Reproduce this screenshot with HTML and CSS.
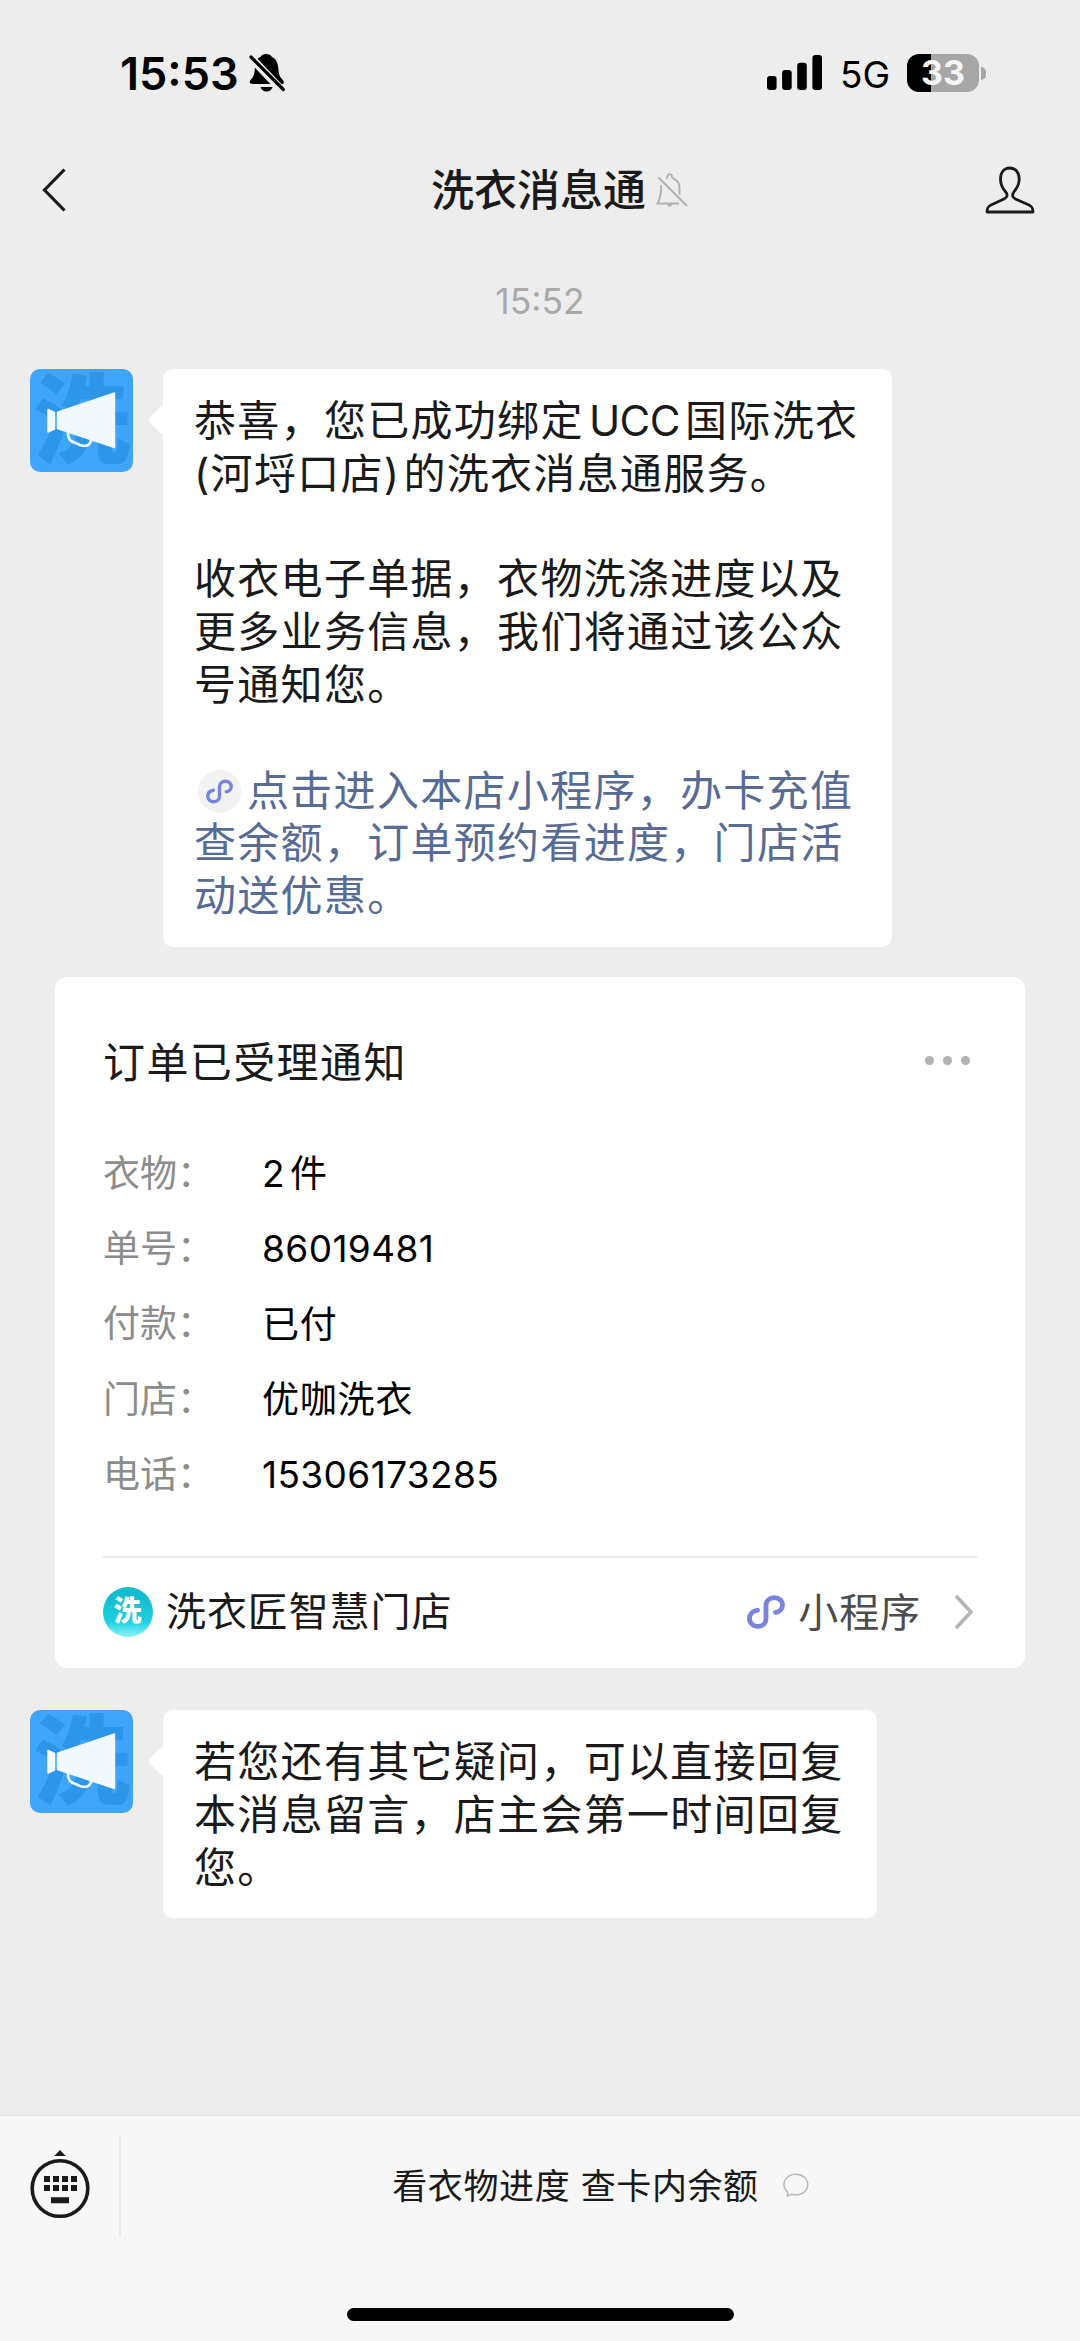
FILE: index.html
```
<!DOCTYPE html>
<html lang="zh-CN">
<head>
    <meta charset="UTF-8">
    <meta name="viewport" content="width=device-width, initial-scale=1.0">
    <title>洗衣消息通</title>
    <link rel="stylesheet" href="styles.css">
</head>
<body>
    <!-- Shared icons -->
    <svg class="defs" width="0" height="0">
        <symbol id="mini" viewBox="0 0 38 34">
            <path d="M10.5 15.2C5.800 16 2.500 19 2.500 23.500C2.500 28 6.200 31.400 11 31.400C15.800 31.400 19 28 19 23.500V10.500C19 6 22.500 2.600 27.200 2.600C32 2.600 35.500 5.800 35.500 10C35.500 14 32.500 17 28.500 17.300" fill="none" stroke="currentColor" stroke-width="4.800" stroke-linecap="round"/>
        </symbol>
        <symbol id="horn" viewBox="0 0 103 103">
            <path d="M18 40.500L24.500 43.500V60L18 63Z M27.500 43.300L84.500 24V78.500L27.500 59.500Z" fill="#f1f8fe" stroke="#f1f8fe" stroke-width="1.500" stroke-linejoin="round"/>
            <path d="M38 63C38 69 39 71 42 72.500L50 76C56 78 59.500 77 61.500 71" fill="none" stroke="#f1f8fe" stroke-width="2.800"/>
        </symbol>
    </svg>

    <!-- Status bar -->
    <div class="status">
        <span class="clock">15:53</span>
        <svg class="silent" width="36" height="38" viewBox="0 0 36 38">
            <path d="M17 0C20 0 22 1 23 3C28 5 29 10 29.500 16C30 21 31 23 33 25C35 27 35.500 28.500 34 30H4C0 30 0 27.500 2 25.500C5.500 22 5.500 18 6 13C6.500 7 8 4.500 11.500 3C12.500 1 14.500 0 17 0Z"/>
            <path d="M11.500 33H23.500C22.500 36 20.500 37.500 17.500 37.500C14.500 37.500 12.500 36 11.500 33Z"/>
            <path d="M-2 -.500L34 37.500" stroke="#ededed" stroke-width="8"/>
            <path d="M2 3L34.300 35.500" stroke="#000" stroke-width="3.200" stroke-linecap="round"/>
        </svg>
        <svg class="signal" width="56" height="36" viewBox="0 0 56 36">
            <rect x="0" y="21" width="9.600" height="14" rx="3"/>
            <rect x="15.100" y="15" width="9.600" height="20" rx="3"/>
            <rect x="30.200" y="7.700" width="9.600" height="27.300" rx="3"/>
            <rect x="45.400" y="0" width="9.600" height="35" rx="3"/>
        </svg>
        <span class="network">5G</span>
        <div class="battery"><span>33</span></div>
        <div class="battery-cap"></div>
    </div>

    <!-- Nav bar -->
    <div class="navbar">
        <svg class="back" width="26" height="46" viewBox="0 0 26 46">
            <path d="M23.500 2.500L3.500 23L23.500 43.500" fill="none" stroke="#1a1a1a" stroke-width="3.200"/>
        </svg>
        <div class="title">
            <h1>洗衣消息通</h1>
            <svg width="32" height="34" viewBox="0 0 32 34" fill="none" stroke="#b0b0b0" stroke-width="1.900">
                <path d="M10 5.500C11 4.800 11.500 4.500 11.500 3.500C12 .500 15.500 .500 16 3.500C16 4.500 16.500 5 18 5.800C22 7.800 23.500 11 23.500 14.500V22"/>
                <path d="M5 12V17C5 23 4 25 1.500 30.500H23"/>
                <path d="M11.500 30.500Q13.800 35 16 30.500"/>
                <path d="M2.500 4.500L31 33"/>
            </svg>
        </div>
        <svg class="profile" width="50" height="48" viewBox="0 0 50 48">
            <path d="M24.800 2C19 2 15.500 6.500 15.500 13C15.500 18 17 21.500 20 25C23 28.500 22.800 31 19 33L6 39C2.500 40.800 2 42.500 2 46H48C48 42.500 47.500 40.800 44 39L30.500 33C26.800 31 26.800 28.500 29.500 25C32.500 21.500 34.200 18 34.200 13C34.200 6.500 30.600 2 24.800 2Z" fill="none" stroke="#1a1a1a" stroke-width="2.800" stroke-linejoin="round"/>
        </svg>
    </div>

    <!-- Messages -->
    <div class="chat">
        <div class="time">15:52</div>

        <div class="message">
            <div class="avatar"><span>洗</span><svg><use href="#horn"/></svg></div>
            <div class="bubble wide">
                恭喜，您已成功绑定<span class="latin">UCC</span>国际洗衣<br>
                (河埒口店<span class="paren">)</span>的洗衣消息通服务。<br>
                <br>
                收衣电子单据，衣物洗涤进度以及<br>
                更多业务信息，我们将通过该公众<br>
                号通知您。<br>
                <br>
                <a class="link"><span class="link-icon"><svg><use href="#mini"/></svg></span>点击进入本店小程序，办卡充值<br>
                查余额，订单预约看进度，门店活<br>
                动送优惠。</a>
            </div>
        </div>

        <div class="card">
            <div class="card-head">
                <h2>订单已受理通知</h2>
                <div class="dots"><i></i><i></i><i></i></div>
            </div>
            <dl>
                <dt>衣物：</dt><dd>2件</dd>
                <dt>单号：</dt><dd class="num">86019481</dd>
                <dt>付款：</dt><dd>已付</dd>
                <dt>门店：</dt><dd>优咖洗衣</dd>
                <dt>电话：</dt><dd class="num">15306173285</dd>
            </dl>
            <div class="card-foot">
                <span class="shop-icon">洗</span>
                <span class="shop">洗衣匠智慧门店</span>
                <svg class="mini-icon"><use href="#mini"/></svg>
                <span class="mini">小程序</span>
                <svg class="arrow" width="20" height="36" viewBox="0 0 20 36">
                    <path d="M2 2L17 18L2 34" fill="none" stroke="#b5b5b5" stroke-width="3.600"/>
                </svg>
            </div>
        </div>

        <div class="message">
            <div class="avatar"><span>洗</span><svg><use href="#horn"/></svg></div>
            <div class="bubble">
                若您还有其它疑问，可以直接回复<br>
                本消息留言，店主会第一时间回复<br>
                您。
            </div>
        </div>
    </div>

    <!-- Bottom menu -->
    <div class="toolbar">
        <div class="menu">
            <div class="keyboard">
                <svg width="60" height="69" viewBox="0 0 60 69">
                    <path d="M24.300 6L30 0L35.700 6Z"/>
                    <circle cx="30" cy="38.500" r="27.800" fill="none" stroke="#1a1a1a" stroke-width="3.600"/>
                    <path d="M14 26h6v6h-6z M23 26h6v6h-6z M32 26h6v6h-6z M41 26h6v6h-6z M14 35h6v6h-6z M23 35h6v6h-6z M32 35h6v6h-6z M41 35h6v6h-6z M21 47.300h18v6h-18z"/>
                </svg>
            </div>
            <div class="menu-item">
                <span>看衣物进度 查卡内余额</span>
                <svg width="26" height="25" viewBox="0 0 26 25">
                    <path d="M5 19.500C-3 12 2 1.200 13 1.200C19.500 1.200 24.800 5.800 24.800 11.500C24.800 19 17 23.500 8.500 21.200L4.300 23.300Z" fill="none" stroke="#b8b8b8" stroke-width="1.500" stroke-linejoin="round"/>
                </svg>
            </div>
        </div>
        <div class="home"></div>
    </div>
</body>
</html>
```
FILE: styles.css
```
* {
    box-sizing: border-box;
}
body {
    margin: 0;
    height: 2341px;
    display: flex;
    flex-direction: column;
    background-color: #ededed;
    color: #1a1a1a;
    font-family: Inter, "Noto Sans CJK SC", sans-serif;
    text-autospace: normal;
    overflow: hidden;
}
svg {
    display: block;
    flex-shrink: 0;
}
h1, h2, dl, dd {
    margin: 0;
}
.defs {
    position: absolute;
}

/* status bar */
.status {
    height: 144px;
    padding: 2px 94px 0 120px;
    display: flex;
    align-items: center;
    color: #000;
}
.clock {
    font-size: 45px;
    font-weight: 600;
    width: 129px;
}
.signal {
    margin-left: auto;
}
.network {
    font-size: 37px;
    margin-left: 17px;
    width: 67px;
    padding-top: 2px;
}
.battery {
    width: 72px;
    height: 38px;
    border-radius: 12px;
    background: linear-gradient(to right, #000 24px, #a6a6a6 24px);
    color: #f5f5f5;
    font-size: 34px;
    font-weight: 700;
    line-height: 38px;
    text-align: center;
}
.battery-cap {
    width: 5px;
    height: 13px;
    margin-left: 2px;
    border-radius: 0 5px 5px 0;
    background-color: #a6a6a6;
}

/* nav bar */
.navbar {
    height: 92px;
    padding: 0 45px 0 41px;
    display: flex;
    justify-content: space-between;
    align-items: center;
}
.title {
    display: flex;
    align-items: center;
    gap: 10px;
    padding-left: 67px;
}
.title h1 {
    font-size: 43px;
    font-weight: 500;
    line-height: 60px;
}

/* chat */
.chat {
    flex: 1;
}
.time {
    height: 133px;
    padding-top: 40px;
    text-align: center;
    color: #a9a9a9;
    font-size: 35.5px;
    line-height: 52px;
}
.message {
    display: flex;
    padding-left: 30px;
    gap: 30px;
}
.avatar {
    position: relative;
    width: 103px;
    height: 103px;
    border-radius: 10px;
    background-color: #3fa5fb;
    color: #2b96ea;
    font-size: 97px;
    font-weight: 900;
    line-height: 101px;
    text-align: center;
}
.avatar svg {
    position: absolute;
    left: 0;
    top: 0;
    width: 103px;
    height: 103px;
}
.bubble {
    position: relative;
    width: 714px;
    padding: 26px 0 24px 31px;
    border-radius: 10px;
    background-color: #fff;
    font-size: 42px;
    line-height: 52.8px;
    letter-spacing: 1.3px;
    white-space: nowrap;
}
.bubble.wide {
    width: 729px;
}
.bubble::before {
    content: "";
    position: absolute;
    left: -11px;
    top: 40px;
    width: 22px;
    height: 22px;
    border-radius: 4px;
    background-color: #fff;
    transform: rotate(45deg);
}
.latin {
    letter-spacing: -0.6px;
}
.paren {
    margin-right: 3px;
}
.link {
    color: #576b95;
}
.link-icon {
    display: inline-flex;
    align-items: center;
    justify-content: center;
    width: 43px;
    height: 43px;
    margin: -10px 6px -10px 4px;
    border-radius: 50%;
    background-color: #f2f2f2;
    color: #7a84dc;
    vertical-align: 2px;
}
.link-icon svg {
    width: 27px;
    height: 25px;
}

/* order card */
.card {
    width: 970px;
    height: 691px;
    margin: 30px 0 42px 55px;
    padding: 0 48px;
    border-radius: 12px;
    background-color: #fff;
}
.card-head {
    display: flex;
    justify-content: space-between;
    padding-top: 56px;
}
.card-head h2 {
    font-size: 42px;
    font-weight: 400;
    line-height: 60px;
    letter-spacing: 1.4px;
}
.dots {
    display: flex;
    gap: 9px;
    padding: 23px 7px 0 0;
}
.dots i {
    width: 9px;
    height: 9px;
    border-radius: 50%;
    background-color: #b2b2b2;
}
dl {
    display: grid;
    grid-template-columns: 159px 1fr;
    grid-auto-rows: 75.4px;
    align-items: center;
    margin-top: 43px;
    height: 422px;
    border-bottom: 2px solid #ebebeb;
    font-size: 37px;
}
dt {
    padding-bottom: 6px;
    color: #8c8c8c;
}
dd {
    padding-bottom: 5px;
    color: #000;
    letter-spacing: 0.8px;
}
.num {
    padding-bottom: 1px;
    letter-spacing: 0.4px;
}
.card-foot {
    display: flex;
    align-items: center;
    height: 109px;
    font-size: 40px;
    letter-spacing: 0.9px;
}
.shop-icon {
    width: 50px;
    height: 50px;
    border-radius: 50%;
    background: linear-gradient(#12bcd0 20%, #1fd0e2 70%, #8af5f8);
    color: #fff;
    font-size: 28px;
    font-weight: 900;
    line-height: 48px;
    text-align: center;
}
.shop {
    margin-left: 13px;
    padding-bottom: 7px;
}
.mini-icon {
    width: 38px;
    height: 34px;
    margin-left: auto;
    color: #7a84dc;
}
.mini {
    margin: 0 33px 0 13px;
    padding-bottom: 4px;
    color: #4c4c4c;
}
.arrow {
    margin-right: 3px;
}

/* bottom menu */
.toolbar {
    height: 226px;
    border-top: 1px solid #e0e0e0;
    background-color: #f7f7f7;
}
.menu {
    display: flex;
    height: 140px;
    padding-top: 18px;
}
.keyboard {
    width: 121px;
    height: 102px;
    padding: 16px 0 0 30px;
    border-right: 2px solid #ebebeb;
    fill: #1a1a1a;
}
.menu-item {
    flex: 1;
    display: flex;
    justify-content: center;
    align-items: center;
    gap: 24px;
    height: 102px;
    font-size: 35px;
    letter-spacing: 0.6px;
}
.menu-item span {
    padding-bottom: 4px;
}
.home {
    width: 387px;
    height: 13px;
    margin: 52px auto 0;
    border-radius: 7px;
    background-color: #000;
}
```
